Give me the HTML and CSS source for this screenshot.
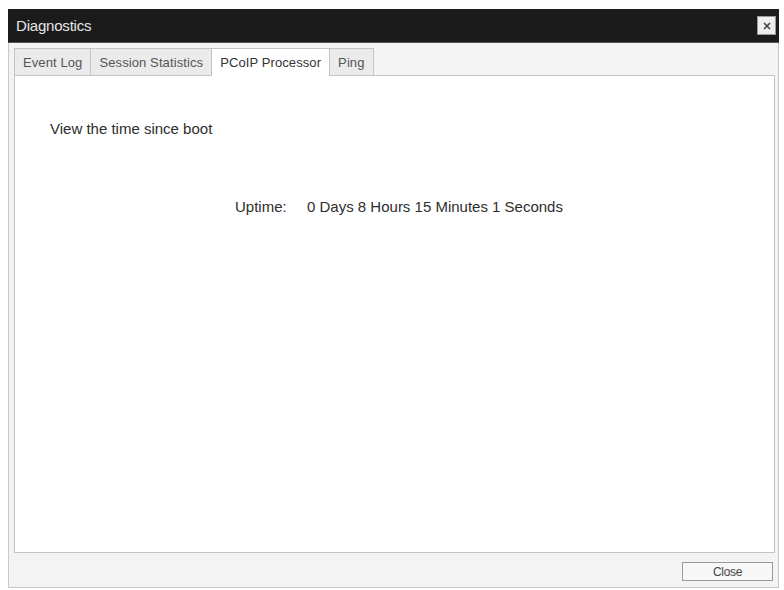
FILE: index.html
```html
<!DOCTYPE html>
<html>
<head>
<meta charset="utf-8">
<link rel="stylesheet" href="styles.css">
</head>
<body>
<div class="window">
  <div class="titlebar">
    <span class="title">Diagnostics</span>
    <span class="close-x">
      <svg width="12" height="12" viewBox="0 0 12 12"><path d="M3 3 L9 9 M9 3 L3 9" stroke="#444" stroke-width="1.6"/></svg>
    </span>
  </div>
  <div class="body">
    <div class="tabs">
      <div class="tab">Event Log</div>
      <div class="tab">Session Statistics</div>
      <div class="tab active">PCoIP Processor</div>
      <div class="tab">Ping</div>
    </div>
    <div class="panel">
      <p class="intro">View the time since boot</p>
      <div class="uptime">
        <span class="label">Uptime:</span>
        <span class="value">0 Days 8 Hours 15 Minutes 1 Seconds</span>
      </div>
    </div>
    <div class="footer">
      <button class="btn">Close</button>
    </div>
  </div>
</div>
</body>
</html>
```
FILE: styles.css
```css
html, body {
  margin: 0;
  padding: 0;
  background: #ffffff;
}
body {
  font-family: "Liberation Sans", Arial, sans-serif;
  color: #2a2a2a;
  padding: 9px 5px 2px 8px;
}
.window {
  width: 771px;
  height: 579px;
  display: flex;
  flex-direction: column;
  border: 1px solid #c8c8c8;
  border-top: none;
  box-sizing: border-box;
  background: #f3f3f3;
}
.titlebar {
  height: 33px;
  background: #1b1b1b;
  display: flex;
  align-items: center;
  justify-content: space-between;
  padding: 0 3px 0 8px;
  margin: 0 -1px;
  border-bottom: 1px solid #555;
}
.title {
  color: #e6e6e6;
  font-size: 15px;
  letter-spacing: -0.2px;
}
.close-x {
  width: 17px;
  height: 17px;
  background: #eeeeee;
  border: 1px solid #999;
  display: flex;
  align-items: center;
  justify-content: center;
}
.body {
  flex: 1;
  display: flex;
  flex-direction: column;
  padding: 5px 3px 0 5px;
}
.tabs {
  display: flex;
  height: 27px;
}
.tab {
  font-size: 13px;
  letter-spacing: 0.1px;
  color: #555;
  background: #ebebeb;
  border: 1px solid #c4c4c4;
  border-bottom: none;
  padding: 0 8px;
  display: flex;
  align-items: center;
  margin-right: -1px;
}
.tab.active {
  background: #ffffff;
  color: #333;
  position: relative;
  z-index: 1;
  margin-bottom: -1px;
  padding-bottom: 1px;
}
.panel {
  flex: 1;
  background: #fff;
  border: 1px solid #c4c4c4;
}
.intro {
  margin: 44px 0 0 35px;
  font-size: 15px;
  color: #2e2e2e;
}
.uptime {
  margin: 61px 0 0 220px;
  font-size: 15px;
  color: #2e2e2e;
  display: flex;
}
.label {
  width: 72px;
}
.footer {
  height: 34px;
  flex: none;
  display: flex;
  justify-content: flex-end;
  align-items: flex-start;
  padding-top: 9px;
  box-sizing: border-box;
}
.btn {
  width: 91px;
  height: 19px;
  background: #f7f7f7;
  border: 1px solid #9a9a9a;
  font-family: "Liberation Sans", Arial, sans-serif;
  font-size: 12px;
  color: #444;
  padding: 0;
  margin-right: 2px;
  letter-spacing: -0.3px;
}
```
